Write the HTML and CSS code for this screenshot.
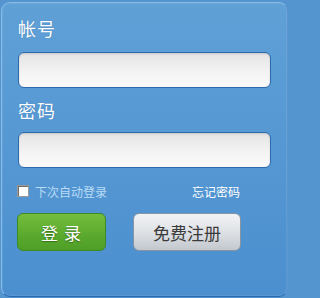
FILE: index.html
```html
<!DOCTYPE html>
<html lang="zh">
<head>
<meta charset="utf-8">
<link rel="stylesheet" href="styles.css">
</head>
<body>
<div class="panel">
  <div class="label">帐号</div>
  <div class="field"></div>
  <div class="label label-2">密码</div>
  <div class="field"></div>
  <div class="options">
    <label class="remember"><span class="box"></span><span class="remember-text">下次自动登录</span></label>
    <a class="forgot">忘记密码</a>
  </div>
  <div class="actions">
    <button class="btn btn-login">登 录</button>
    <button class="btn btn-register">免费注册</button>
  </div>
</div>
</body>
</html>
```

FILE: styles.css
```css
html, body {
  margin: 0;
  padding: 0;
}
body {
  width: 290px;
  height: 298px;
  background: #5595cf;
  font-family: "Noto Sans CJK SC", "Noto Sans", sans-serif;
  overflow: hidden;
}
.panel {
  box-sizing: border-box;
  margin: 2px 2px 0 1px;
  height: 295px;
  border: 1px solid #86bbe6;
  border-bottom-color: #2b67ae;
  border-right-color: #5d95cf;
  border-radius: 9px;
  background: linear-gradient(#5fa0d6, #4b8fcf);
  padding: 13px 16px 0 16px;
  display: flex;
  flex-direction: column;
  box-shadow: inset 0 0 0 1px rgba(255,255,255,0.08);
}
.label {
  height: 24px;
  line-height: 24px;
  font-size: 18px;
  color: #ffffff;
  letter-spacing: 1px;
  text-shadow: 0 0 1px rgba(30,70,130,0.4);
  margin-bottom: 12px;
}
.label-2 {
  margin-top: 10px;
  margin-bottom: 10px;
}
.field {
  box-sizing: border-box;
  height: 36px;
  width: 253px;
  border: 1px solid #2f69ad;
  border-radius: 6px;
  background: linear-gradient(#e4e4e4, #f3f3f3 55%, #fafafa);
  box-shadow: inset 0 1px 2px rgba(0,0,0,0.12);
}
.options {
  margin-top: 13px;
  height: 20px;
  display: flex;
  align-items: center;
  font-size: 12px;
}
.remember {
  display: flex;
  align-items: center;
  width: 175px;
}
.box {
  box-sizing: border-box;
  width: 12px;
  height: 12px;
  margin-left: -1px;
  background: #ffffff;
  border: 1px solid #9a9a9a;
  box-shadow: inset 1px 1px 0 #6d6d6d;
}
.remember-text {
  margin-left: 6px;
  color: #b9dbf5;
}
.forgot {
  color: #ffffff;
  margin-left: -1px;
}
.actions {
  margin-top: 12px;
  display: flex;
  gap: 27px;
  margin-left: -1px;
}
.btn {
  box-sizing: border-box;
  height: 38px;
  border-radius: 6px;
  font-family: "Noto Sans CJK SC", "Noto Sans", sans-serif;
  font-size: 16px;
  padding: 0;
  cursor: pointer;
}
.btn-login {
  width: 89px;
  color: #ffffff;
  border: 1px solid #3e8a24;
  background: linear-gradient(#74bd3d, #5aa92e 60%, #4f9e27);
  text-shadow: 0 1px 1px rgba(30,70,10,0.6);
  font-size: 17px;
  letter-spacing: 1px;
}
.btn-register {
  width: 108px;
  color: #3a3a3a;
  border: 1px solid #8694a3;
  background: linear-gradient(#f2f3f5, #dcdfe3 55%, #c3c8ce);
  font-size: 17px;
}
```
